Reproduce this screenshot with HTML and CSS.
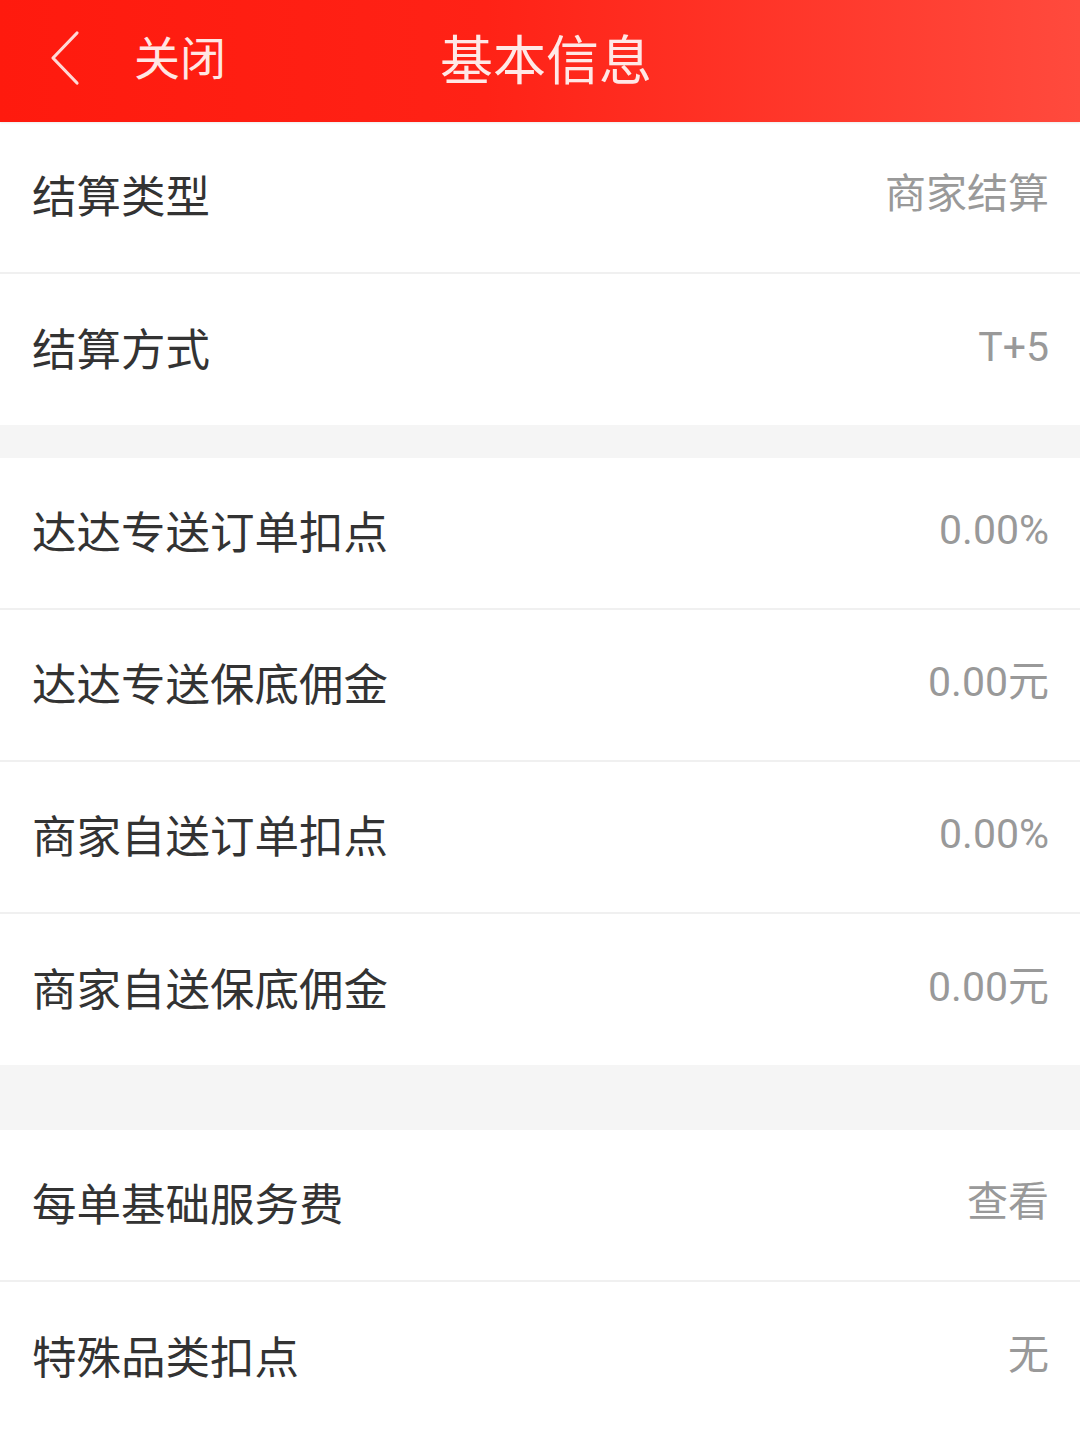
FILE: index.html
```html
<!DOCTYPE html>
<html lang="zh-CN">
<head>
<meta charset="utf-8">
<title>基本信息</title>
<link rel="stylesheet" href="styles.css">
</head>
<body>
<header class="topbar">
  <div class="back">
    <svg class="chevron" width="34" height="56" viewBox="0 0 34 56"><path d="M29 3 L5 28 L29 53" fill="none" stroke="#ffd9d6" stroke-width="3.2" stroke-linecap="round" stroke-linejoin="round"/></svg>
    <span class="close">关闭</span>
  </div>
  <h1 class="title">基本信息</h1>
</header>
<main>
  <section class="group">
    <div class="row"><span class="label">结算类型</span><span class="value">商家结算</span></div>
    <div class="row"><span class="label">结算方式</span><span class="value">T+5</span></div>
  </section>
  <div class="gap gap-s"></div>
  <section class="group">
    <div class="row"><span class="label">达达专送订单扣点</span><span class="value">0.00%</span></div>
    <div class="row"><span class="label">达达专送保底佣金</span><span class="value">0.00元</span></div>
    <div class="row"><span class="label">商家自送订单扣点</span><span class="value">0.00%</span></div>
    <div class="row"><span class="label">商家自送保底佣金</span><span class="value">0.00元</span></div>
  </section>
  <div class="gap gap-l"></div>
  <section class="group">
    <div class="row"><span class="label">每单基础服务费</span><span class="value">查看</span></div>
    <div class="row"><span class="label">特殊品类扣点</span><span class="value">无</span></div>
  </section>
</main>
</body>
</html>
```
FILE: styles.css
```css
* { box-sizing: border-box; margin: 0; padding: 0; }
html, body { background: #fff; }
body {
  width: 1080px;
  font-family: "Noto Sans CJK SC", "Noto Sans", sans-serif;
  overflow: hidden;
}
.topbar {
  height: 122px;
  background: linear-gradient(90deg, #ff1a0e 0%, #ff2216 45%, #ff4a3d 100%);
  display: flex;
  align-items: center;
  position: relative;
  box-shadow: 0 1px 2px rgba(0,0,0,0.08);
}
.back {
  display: flex;
  align-items: center;
  padding-left: 48px;
  gap: 52px;
  margin-top: -6px;
}
.chevron { display: block; }
.close {
  color: #ffe6e3;
  font-size: 46px;
  line-height: 1;
  margin-top: -6px;
}
.title {
  position: absolute;
  left: 440px;
  top: 0;
  height: 122px;
  display: flex;
  align-items: center;
  color: #ffe8e6;
  font-size: 53px;
  font-weight: 400;
  padding-bottom: 8px;
}
.group { background: #fff; }
.row {
  height: 152px;
  border-bottom: 2px solid #f0f0f0;
  display: flex;
  align-items: center;
  justify-content: space-between;
  padding: 0 31px 5px 32px;
}
.row:last-child { height: 151px; border-bottom: none; padding-bottom: 5px; }
.label {
  color: #333;
  font-size: 44.5px;
  line-height: 1;
}
.value {
  color: #999;
  font-family: Roboto, "Noto Sans CJK SC", sans-serif;
  font-size: 41px;
  line-height: 1;
}
.gap { background: #f5f5f5; }
.gap-s { height: 33px; }
.gap-l { height: 65px; }
```
